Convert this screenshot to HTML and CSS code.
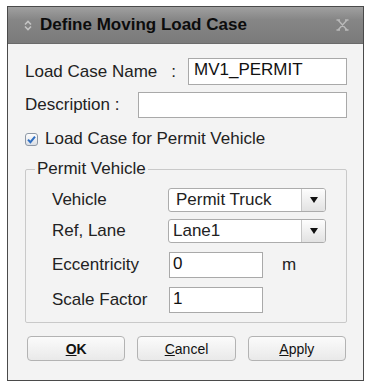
FILE: index.html
```html
<!DOCTYPE html>
<html lang="en">
<head>
	<meta charset="UTF-8">
	<title>Define Moving Load Case</title>
	<link rel="stylesheet" href="styles.css">
</head>
<body>
	<div class="dialog">
		<div class="titlebar">
			<svg class="grip" width="8" height="11" viewBox="0 0 8 11">
				<path d="M1 4.5 L4 1.5 L7 4.5 M1 6.5 L4 9.5 L7 6.5" fill="none" stroke="#c4c4c4" stroke-width="1.6"/>
			</svg>
			<span class="title">Define Moving Load Case</span>
			<svg class="close" width="13" height="12" viewBox="0 0 13 12">
				<path d="M2 1 L11 11 M11 1 L2 11 M0.5 1 H4 M9 1 H12.5 M0.5 11 H4 M9 11 H12.5" fill="none" stroke="#b9b9b9" stroke-width="1.4"/>
			</svg>
		</div>

		<div class="content">
			<div class="row row-name">
				<span>Load Case Name</span><span class="colon">:</span>
				<input class="text name" type="text" value="MV1_PERMIT">
			</div>
			<div class="row row-desc">
				<span>Description :</span>
				<input class="text desc" type="text" value="">
			</div>
			<div class="row row-check">
				<span class="check">
					<svg width="13" height="13" viewBox="0 0 13 13">
						<defs>
							<linearGradient id="cb" x1="0" y1="0" x2="0" y2="1">
								<stop offset="0" stop-color="#ffffff"/>
								<stop offset="1" stop-color="#d9dde4"/>
							</linearGradient>
						</defs>
						<rect x="0.5" y="0.5" width="12" height="12" rx="2.5" fill="url(#cb)" stroke="#8e98a6"/>
						<path d="M3 6.6 L5.4 9.2 L10 3.6" fill="none" stroke="#2f6fc2" stroke-width="2"/>
					</svg>
				</span>
				<span>Load Case for Permit Vehicle</span>
			</div>

			<fieldset class="group">
				<legend>Permit Vehicle</legend>
				<div class="grow">
					<span class="lbl">Vehicle</span>
					<div class="combo">
						<span class="combo-text">Permit Truck</span>
						<span class="combo-btn"><i></i></span>
					</div>
				</div>
				<div class="grow">
					<span class="lbl">Ref, Lane</span>
					<div class="combo lane">
						<span class="combo-text">Lane1</span>
						<span class="combo-btn"><i></i></span>
					</div>
				</div>
				<div class="grow tall">
					<span class="lbl">Eccentricity</span>
					<input class="text small" type="text" value="0">
					<span class="unit">m</span>
				</div>
				<div class="grow tall">
					<span class="lbl">Scale Factor</span>
					<input class="text small" type="text" value="1">
				</div>
			</fieldset>

			<div class="buttons">
				<button class="btn ok"><u>O</u>K</button>
				<button class="btn"><u>C</u>ancel</button>
				<button class="btn"><u>A</u>pply</button>
			</div>
		</div>
	</div>
</body>
</html>
```

FILE: styles.css
```css
*{margin:0;padding:0;box-sizing:border-box;}
body{background:#fff;padding:6px 0 0 7px;font-family:"Liberation Sans",Arial,sans-serif;font-size:17px;color:#222;}

.dialog{width:357px;height:375px;border:1px solid #4a4a4a;background:#f3f3f3;display:flex;flex-direction:column;}

.titlebar{height:37px;display:flex;align-items:center;padding:0 14px 0 16px;background:linear-gradient(#a0a0a0,#868686 35%,#7a7a7a);border-bottom:1px solid #6a6a6a;}
.titlebar .grip{margin-right:8px;}
.titlebar .title{font-weight:bold;font-size:17px;color:#0c0c0c;flex:1;}

.content{padding:14px 16px 0 17px;display:flex;flex-direction:column;}

.row{display:flex;align-items:center;}
.row-name{height:27px;}
.row-name .colon{margin-left:14px;}
.row-desc{height:26px;margin-top:7px;}
.row-check{height:18px;margin-top:12px;}
.check{display:flex;width:13px;height:13px;margin-right:7px;}

.text{height:100%;border:1px solid #a9a9a9;background:#fff;font-family:"Liberation Sans",Arial,sans-serif;font-size:17px;color:#111;padding:0 0 3px 5px;outline:none;}
.name{width:159px;margin-left:auto;}
.desc{width:209px;margin-left:auto;}

.group{margin-top:11px;border:1px solid #c9c9c9;border-radius:2px;padding:9px 0 9px 0;}
.group legend{margin-left:9px;padding:0 2px;line-height:20px;}

.grow{display:flex;align-items:center;height:24px;margin-top:7px;padding-left:26px;}
.grow:first-of-type{margin-top:0;}
.grow.tall{height:26px;margin-top:9px;}
.lbl{width:116px;}

.combo{width:158px;height:100%;display:flex;border:1px solid #acacac;border-radius:3px;background:#fff;}
.combo-text{flex:1;padding-left:7px;line-height:22px;}
.combo.lane .combo-text{padding-left:4px;}
.combo-btn{width:24px;display:flex;align-items:center;justify-content:center;border-left:1px solid #c6c6c6;border-radius:0 2px 2px 0;background:linear-gradient(#fdfdfd,#e2e2e2);}
.combo-btn i{width:0;height:0;border-left:4px solid transparent;border-right:4px solid transparent;border-top:6px solid #111;}

.small{width:94px;margin-left:1px;padding-left:3px;}
.unit{margin-left:19px;}

.buttons{display:grid;grid-template-columns:repeat(3,1fr);gap:12px;margin-top:13px;padding:0 1px 0 2px;}
.btn{height:25px;border:1px solid #b3b3b3;border-radius:4px;background:linear-gradient(#fbfbfb,#e9e9e9);font-family:"Liberation Sans",Arial,sans-serif;font-size:14px;color:#111;}
.btn.ok{font-weight:bold;}
```
